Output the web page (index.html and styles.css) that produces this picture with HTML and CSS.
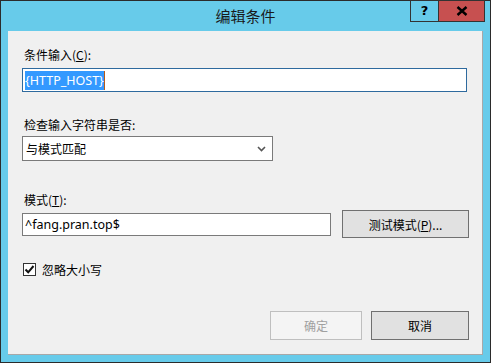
FILE: index.html
```html
<!DOCTYPE html>
<html lang="zh-CN">
<head>
    <meta charset="UTF-8">
    <title>编辑条件</title>
    <link rel="stylesheet" href="styles.css">
</head>
<body>
    <div class="ventana">
        <div class="barra-titulo">
            <div class="titulo">编辑条件</div>
            <div class="controles">
                <div class="btn-ayuda">?</div>
                <div class="btn-cerrar">
                    <svg width="12" height="10" viewBox="0 0 12 10">
                        <path d="M1.5 1 L10.5 9 M10.5 1 L1.5 9" stroke="#000" stroke-width="2.4"/>
                    </svg>
                </div>
            </div>
        </div>

        <div class="contenido">
            <div class="etiqueta etiqueta-1">条件输入(<u>C</u>):</div>
            <div class="campo campo-activo">
                <span class="seleccion">{HTTP_HOST}</span>
            </div>

            <div class="etiqueta etiqueta-2">检查输入字符串是否:</div>
            <div class="lista">
                <span>与模式匹配</span>
                <svg width="9" height="6" viewBox="0 0 9 6">
                    <path d="M1 1 L4.5 4.5 L8 1" stroke="#555" stroke-width="1.6" fill="none"/>
                </svg>
            </div>

            <div class="etiqueta etiqueta-3">模式(<u>T</u>):</div>
            <div class="fila-patron">
                <div class="campo campo-patron">^fang.pran.top$</div>
                <div class="boton boton-probar">测试模式(<u>P</u>)...</div>
            </div>

            <div class="fila-check">
                <div class="casilla">
                    <svg width="11" height="11" viewBox="0 0 11 11">
                        <path d="M1.5 5.5 L4.2 8.3 L9.5 2" stroke="#111" stroke-width="2" fill="none"/>
                    </svg>
                </div>
                <span>忽略大小写</span>
            </div>

            <div class="fila-botones">
                <div class="boton boton-desactivado">确定</div>
                <div class="boton boton-cancelar">取消</div>
            </div>
        </div>
    </div>
</body>
</html>
```

FILE: styles.css
```css
body {
    margin: 0;
    padding: 0;
    font-family: "Noto Sans", "Noto Sans CJK SC", sans-serif;
    font-size: 12.5px;
    color: #000;
}

.ventana {
    width: 489px;
    height: 361px;
    border: 1px solid #2b2b2b;
    background-color: #67cbea;
}

.barra-titulo {
    display: flex;
    height: 30px;
}

.titulo {
    flex: 1;
    padding-left: 80px;
    text-align: center;
    font-family: "Noto Sans CJK SC", sans-serif;
    font-size: 15px;
    line-height: 29px;
    color: #1a1a1a;
}

.controles {
    display: flex;
    margin-top: -1px;
    margin-right: 5px;
    height: 22px;
}

.btn-ayuda {
    width: 27px;
    height: 20px;
    border: 1px solid #333;
    text-align: center;
    font-family: "DejaVu Sans", sans-serif;
    font-weight: bold;
    font-size: 13px;
    line-height: 20px;
}

.btn-cerrar {
    width: 45px;
    height: 20px;
    margin-left: -1px;
    border: 1px solid #333;
    background-color: #c75050;
    display: flex;
    justify-content: center;
    align-items: center;
}

.contenido {
    width: 460px;
    height: 307px;
    margin-left: 7px;
    padding: 16px 0 0 14px;
    background-color: #f0f0f0;
    border-right: 1px solid #a8a8a8;
    border-bottom: 1px solid #a8a8a8;
}

.etiqueta {
    height: 16px;
    line-height: 16px;
    padding-left: 2px;
    font-family: "Noto Sans CJK SC", sans-serif;
    font-size: 12px;
}

.etiqueta-2 {
    margin-top: 25px;
}

.etiqueta-3 {
    margin-top: 31px;
}

.campo {
    box-sizing: border-box;
    background-color: #fff;
    border: 1px solid #7a7a7a;
    padding-left: 2px;
    display: flex;
    align-items: center;
}

.campo-activo {
    width: 445px;
    height: 24px;
    margin-top: 5px;
    border-color: #2e6a9e;
}

.seleccion {
    background-color: #3399ff;
    color: #fff;
    line-height: 19px;
    border-right: 1px solid #b65a1a;
}

.lista {
    box-sizing: border-box;
    width: 251px;
    height: 25px;
    margin-top: 3px;
    background-color: #fff;
    border: 1px solid #7a7a7a;
    padding: 0 6px 0 3px;
    display: flex;
    justify-content: space-between;
    align-items: center;
    font-family: "Noto Sans CJK SC", sans-serif;
    font-size: 12px;
}

.fila-patron {
    display: flex;
    align-items: center;
    gap: 11px;
    margin-top: 2px;
    height: 28px;
}

.campo-patron {
    width: 309px;
    height: 23px;
}

.boton {
    box-sizing: border-box;
    display: flex;
    justify-content: center;
    align-items: center;
    background-color: #e1e1e1;
    border: 1px solid #707070;
    font-family: "Noto Sans CJK SC", sans-serif;
    font-size: 12px;
}

.boton-probar {
    width: 127px;
    height: 28px;
}

.fila-check {
    display: flex;
    align-items: center;
    gap: 6px;
    margin-top: 23px;
    height: 16px;
    font-family: "Noto Sans CJK SC", sans-serif;
    font-size: 12px;
}

.casilla {
    box-sizing: border-box;
    width: 13px;
    height: 13px;
    margin-left: 1px;
    border: 1px solid #333;
    background-color: #fff;
    display: flex;
    justify-content: center;
    align-items: center;
}

.fila-botones {
    display: flex;
    gap: 9px;
    margin-top: 34px;
    padding-left: 248px;
}

.boton-desactivado {
    width: 92px;
    height: 29px;
    background-color: #f4f4f4;
    border-color: #bfbfbf;
    color: #a0a0a0;
}

.boton-cancelar {
    width: 98px;
    height: 29px;
}
```
